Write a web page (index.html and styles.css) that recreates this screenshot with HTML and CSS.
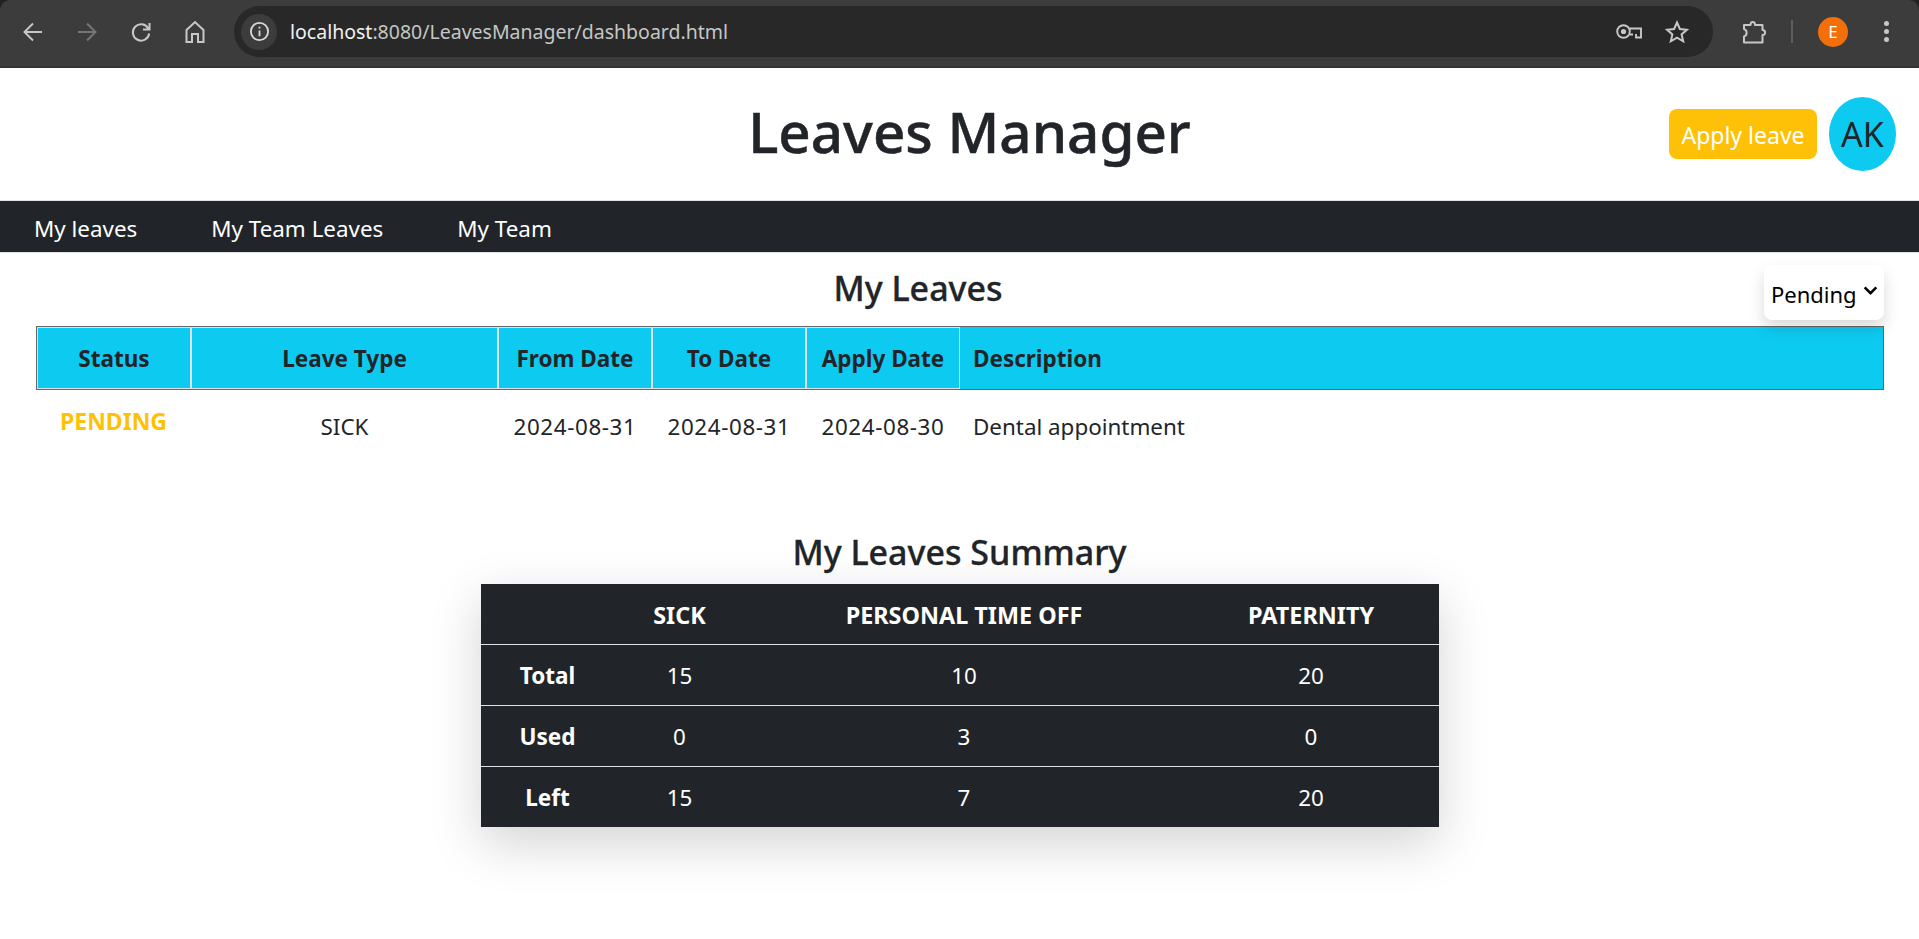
FILE: index.html
```html
<!DOCTYPE html>
<html>

<head>
  <meta charset="UTF-8">
  <title>Leaves Manager</title>
  <link rel="stylesheet" href="styles.css">
</head>

<body>
  <div class="browser-frame">
    <div class="browser-bar">
      <div class="nav-icons">
        <svg class="icon" viewBox="0 0 24 24"><path d="M21 12H4M12 3.500L3.500 12 12 20.500" /></svg>
        <svg class="icon icon-off" viewBox="0 0 24 24"><path d="M3 12h17M12 3.500l8.500 8.500L12 20.500" /></svg>
        <svg class="icon" viewBox="0 0 24 24"><path d="M19.300 8.500A8.200 8.200 0 1 0 20.200 13.500M20.500 3v6.500H14" /></svg>
        <svg class="icon" viewBox="0 0 24 24"><path d="M3.500 22V10L12 2 20.500 10v12h-5.500v-8H9v8z" /></svg>
      </div>
      <div class="omnibox">
        <span class="site-info">
          <svg viewBox="0 0 24 24"><circle cx="12" cy="12" r="9" /><path d="M12 11v6M12 7v1.800" /></svg>
        </span>
        <span class="url"><span class="url-host">localhost</span>:8080/LeavesManager/dashboard.html</span>
        <svg class="key-icon" viewBox="0 0 26 15"><circle cx="7.500" cy="7.500" r="6.300" /><circle class="filled" cx="7.500" cy="7.500" r="2.600" /><path d="M13.500 4.500H25v9h-5v-3.500M13.500 10.500H17" /></svg>
        <svg class="icon star-icon" viewBox="0 0 24 24"><path d="M12 2.500l2.900 6.500 7 .7-5.300 4.700 1.600 6.900-6.200-3.600-6.200 3.600 1.600-6.900-5.300-4.700 7-.7z" /></svg>
      </div>
      <svg class="icon puzzle-icon" viewBox="0 0 24 24"><path d="M2 5H8.500C8.500 1 13 1 13 5H20.500V10C24 10 24 15 20.500 15V22.500H2V16.500C5.500 15.500 5.500 10 2 9z" /></svg>
      <span class="bar-divider"></span>
      <span class="profile">E</span>
      <span class="dots"><i></i><i></i><i></i></span>
    </div>
  </div>

  <header class="page-header">
    <h1>Leaves Manager</h1>
    <div class="header-actions">
      <button class="apply-btn">Apply leave</button>
      <div class="avatar">AK</div>
    </div>
  </header>

  <nav class="main-nav">
    <a href="#">My leaves</a>
    <a href="#">My Team Leaves</a>
    <a href="#">My Team</a>
  </nav>

  <section class="leaves-section">
    <div class="leaves-head">
      <h2>My Leaves</h2>
      <div class="status-select">Pending
        <svg viewBox="0 0 16 16"><path d="M2.500 5l5.500 5.500L13.500 5" /></svg>
      </div>
    </div>
    <table class="leaves-table">
      <thead>
        <tr>
          <th class="col-status">Status</th>
          <th class="col-type">Leave Type</th>
          <th class="col-date">From Date</th>
          <th class="col-date">To Date</th>
          <th class="col-date">Apply Date</th>
          <th class="col-desc">Description</th>
        </tr>
      </thead>
      <tbody>
        <tr>
          <td class="status-pending">PENDING</td>
          <td>SICK</td>
          <td class="date-cell">2024-08-31</td>
          <td class="date-cell">2024-08-31</td>
          <td class="date-cell">2024-08-30</td>
          <td class="col-desc">Dental appointment</td>
        </tr>
      </tbody>
    </table>
  </section>

  <section class="summary-section">
    <h2>My Leaves Summary</h2>
    <table class="summary-table">
      <thead>
        <tr>
          <th class="sum-label"></th>
          <th class="sum-sick">SICK</th>
          <th class="sum-pto">PERSONAL TIME OFF</th>
          <th>PATERNITY</th>
        </tr>
      </thead>
      <tbody>
        <tr>
          <th>Total</th>
          <td>15</td>
          <td>10</td>
          <td>20</td>
        </tr>
        <tr>
          <th>Used</th>
          <td>0</td>
          <td>3</td>
          <td>0</td>
        </tr>
        <tr class="last-row">
          <th>Left</th>
          <td>15</td>
          <td>7</td>
          <td>20</td>
        </tr>
      </tbody>
    </table>
  </section>
</body>

</html>
```

FILE: styles.css
```css
* {
  box-sizing: border-box;
}

html,
body {
  height: 939px;
  overflow: hidden;
}

body {
  margin: 0;
  font-family: "Noto Sans", sans-serif;
  color: #212529;
  background-color: #ffffff;
}

/* browser chrome */
.browser-frame {
  background-color: #222222;
}

.browser-bar {
  display: flex;
  align-items: center;
  height: 68px;
  padding-bottom: 3px;
  background-color: #3c3c3c;
  border-bottom: 2px solid #333333;
  border-radius: 10px 10px 0 0;
}

.nav-icons {
  display: flex;
  gap: 30px;
  width: 234px;
  padding-left: 21px;
}

.icon {
  display: block;
  flex: none;
  width: 24px;
  height: 24px;
  fill: none;
  stroke: #c7c7c7;
  stroke-width: 2;
}

.icon-off {
  stroke: #757575;
}

.omnibox {
  display: flex;
  align-items: center;
  width: 1479px;
  height: 51px;
  padding-left: 7px;
  background-color: #282828;
  border-radius: 26px;
}

.site-info {
  display: flex;
  align-items: center;
  justify-content: center;
  width: 36px;
  height: 36px;
  background-color: #3c3c3c;
  border-radius: 50%;
}

.site-info svg {
  width: 23px;
  height: 23px;
  fill: none;
  stroke: #d8d8d8;
  stroke-width: 1.900;
}

.url {
  flex: 1;
  margin-left: 13px;
  font-size: 19.500px;
  color: #c4c7c5;
}

.url-host {
  color: #f1f1f1;
}

.key-icon {
  flex: none;
  width: 26px;
  height: 15px;
  margin-right: 23px;
  fill: none;
  stroke: #c7c7c7;
  stroke-width: 1.900;
}

.key-icon .filled {
  fill: #c7c7c7;
  stroke: none;
}

.star-icon {
  margin-right: 24px;
}

.puzzle-icon {
  margin-left: 29px;
  stroke-linejoin: round;
}

.bar-divider {
  width: 2px;
  height: 23px;
  margin-left: 25px;
  background-color: #5e5e5e;
}

.profile {
  display: flex;
  align-items: center;
  justify-content: center;
  width: 30px;
  height: 30px;
  margin-left: 25px;
  font-size: 17px;
  color: #ffffff;
  background-color: #f26f0a;
  border-radius: 50%;
}

.dots {
  display: flex;
  flex-direction: column;
  gap: 3px;
  margin-left: 36px;
}

.dots i {
  display: block;
  width: 5px;
  height: 5px;
  background-color: #c7c7c7;
  border-radius: 50%;
}

/* page header */
.page-header {
  display: flex;
  align-items: center;
  height: 132px;
  padding-right: 23px;
}

.page-header h1 {
  flex: 1;
  margin: 0;
  padding-left: 270px;
  padding-bottom: 4px;
  font-size: 56.500px;
  font-weight: 500;
  line-height: 1.2;
  text-align: center;
  -webkit-text-stroke: .5px #212529;
}

.header-actions {
  display: flex;
  align-items: center;
  gap: 12px;
}

.apply-btn {
  width: 148px;
  height: 50px;
  padding: 2px 0 0;
  font-family: inherit;
  font-size: 23px;
  color: #ffffff;
  background-color: #ffc107;
  border: none;
  border-radius: 8px;
}

.avatar {
  display: flex;
  align-items: center;
  justify-content: center;
  width: 67px;
  height: 74px;
  font-size: 34px;
  background-color: #0dcaf0;
  border-radius: 50%;
}

.main-nav {
  display: flex;
  gap: 74px;
  height: 53px;
  padding-top: 3px;
  padding-left: 34px;
  align-items: center;
  background-color: #212529;
  border-top: 1px solid #dee2e6;
  border-bottom: 1px solid #dee2e6;
}

.main-nav a {
  font-size: 22.400px;
  color: #ffffff;
  text-decoration: none;
}

/* my leaves */
.leaves-section {
  padding: 12px 35px 0 36px;
}

.leaves-head {
  display: flex;
  align-items: flex-start;
  height: 61px;
}

.leaves-head h2,
.summary-section h2 {
  margin: 0;
  font-size: 34px;
  font-weight: 500;
  line-height: 1.2;
  text-align: center;
  -webkit-text-stroke: .3px #212529;
}

.leaves-head h2 {
  flex: 1;
  padding-left: 36px;
  margin-top: 3px;
}

.status-select {
  display: flex;
  align-items: center;
  gap: 5px;
  width: 120px;
  height: 55px;
  padding-top: 2px;
  padding-left: 7px;
  font-size: 22px;
  color: #000000;
  background-color: #ffffff;
  border-radius: 8px;
  box-shadow: 0 8px 16px rgba(0, 0, 0, .15);
  position: relative;
}

.status-select svg {
  width: 17px;
  height: 17px;
  margin-top: -7px;
  fill: none;
  stroke: #000000;
  stroke-width: 2.400;
}

.leaves-table {
  width: 100%;
  table-layout: fixed;
  border-collapse: separate;
  border-spacing: 0;
}

.leaves-table thead tr {
  background-color: #0dcaf0;
}

.leaves-table th {
  height: 64px;
  padding: 0;
  font-size: 22.500px;
  font-weight: 700;
  text-align: center;
  border-top: 1px solid #666666;
  border-bottom: 1px solid #666666;
  box-shadow: inset 0 0 0 1px #dee2e6;
}

.leaves-table th:first-child {
  border-left: 1px solid #666666;
}

.leaves-table th:last-child {
  border-right: 1px solid #666666;
  box-shadow: none;
}

.col-status {
  width: 155px;
}

.col-type {
  width: 307px;
}

.col-date {
  width: 154px;
}

.leaves-table td {
  height: 76px;
  padding: 0 0 3px;
  font-size: 22.400px;
  text-align: center;
}

.leaves-table td.date-cell {
  letter-spacing: .6px;
}

.leaves-table .col-desc {
  padding-left: 13px;
  text-align: left;
}

.leaves-table td.status-pending {
  padding-bottom: 14px;
  font-weight: 700;
  font-size: 23px;
  color: #ffc107;
}

/* summary */
.summary-section {
  display: flex;
  flex-direction: column;
  align-items: center;
  margin-top: 66px;
}

.summary-section h2 {
  margin-bottom: 11px;
}

.summary-table {
  width: 958px;
  table-layout: fixed;
  border-collapse: collapse;
  color: #ffffff;
  background-color: #212529;
  box-shadow: 0 16px 48px rgba(0, 0, 0, .175);
}

.summary-table th,
.summary-table td {
  height: 61px;
  padding: 1px 0 0;
  font-size: 22.400px;
  text-align: center;
}

.summary-table th {
  font-size: 22.500px;
  font-weight: 700;
}

.summary-table thead th {
  font-size: 23.400px;
}

.summary-table tbody tr {
  border-top: 1px solid #dee2e6;
}

.summary-table .last-row th,
.summary-table .last-row td {
  height: 60px;
  padding-top: 0;
}

.sum-label {
  width: 134px;
}

.sum-sick {
  width: 130px;
}

.sum-pto {
  width: 439px;
}
```
